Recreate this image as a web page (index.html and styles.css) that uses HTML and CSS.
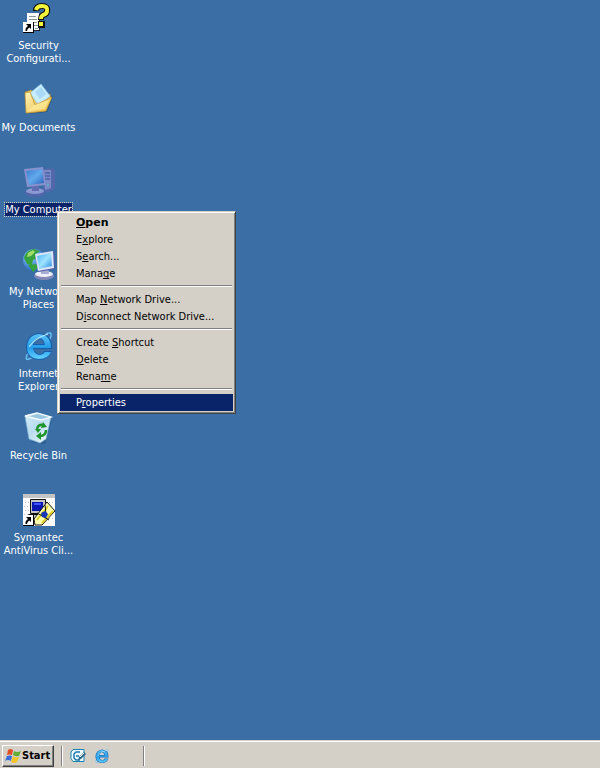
FILE: index.html
```html
<!DOCTYPE html>
<html lang="en">
<head>
<meta charset="utf-8">
<title>Desktop</title>
<link rel="stylesheet" href="styles.css">
</head>
<body>
<svg class="defs" aria-hidden="true">
  <defs>
    <linearGradient id="screen" x1="0" y1="0" x2="1" y2="1"><stop offset="0" stop-color="#48b0f4"/><stop offset=".5" stop-color="#a0e4ff"/><stop offset="1" stop-color="#258be0"/></linearGradient>
    <linearGradient id="folder" x1="0" y1="0" x2="1" y2="1"><stop offset="0" stop-color="#fff5bb"/><stop offset="1" stop-color="#eab83d"/></linearGradient>
    <linearGradient id="dim" x1="0" y1="0" x2="1" y2="1"><stop offset="0" stop-color="#3d7cd0"/><stop offset=".5" stop-color="#62a9ec"/><stop offset="1" stop-color="#2a61bd"/></linearGradient>
    <radialGradient id="globe" cx=".35" cy=".3" r=".8"><stop offset="0" stop-color="#9bd8ff"/><stop offset="1" stop-color="#1659be"/></radialGradient>
    <linearGradient id="bin" x1="0" y1="0" x2="1" y2="1"><stop offset="0" stop-color="#d4ecf8"/><stop offset=".45" stop-color="#b9dcf0"/><stop offset="1" stop-color="#f4fcff"/></linearGradient>
    <linearGradient id="ie" x1="0" y1="0" x2="0" y2="1"><stop offset="0" stop-color="#5cc2f6"/><stop offset=".55" stop-color="#249ce9"/><stop offset="1" stop-color="#63d2ff"/></linearGradient>
    <symbol id="shortcut" viewBox="0 0 11 11"><path fill="#000" d="M0 0h11v11H0z"/><path fill="#fff" d="M0 0h10v10H0z"/><path fill="#000" d="M3 2h5v5L6.500 5.500Q4 6.500 4 9H2.500Q2 6 5 4z"/></symbol>
    <symbol id="e-logo" viewBox="0 0 32 32">
      <path fill="none" stroke="#68c4f6" stroke-width="1.500" d="M5 23Q1 31 6 29Q9 28 13 25M23 4Q29 1 28 6L26 11"/>
      <path fill="#1560ac" fill-rule="evenodd" d="M16 3Q30 4 29 19H11Q12 24 17 24Q20 24 21 21H29Q26 30 16 30Q3 29 3 17Q4 4 16 3zM11 14H21Q20 9 16 9Q12 9 11 14z"/>
      <path fill="url(#ie)" fill-rule="evenodd" d="M16 4Q28 5 28 18H10Q11 25 17 25Q20 25 22 22H28Q25 29 16 29Q4 28 4 17Q5 5 16 4zM10 15H22Q21 8 16 8Q11 8 10 15z"/>
      <path fill="none" stroke="#b0e9ff" stroke-width="1.300" d="M6 17Q12 8 25 4"/>
    </symbol>
  </defs>
</svg>

<main class="desktop">
  <ul class="icons">
    <li><button class="shortcut" type="button">
      <svg viewBox="0 0 32 32" aria-hidden="true">
        <path fill="#223" d="M5 12h12v17H5z"/><path fill="#fff" d="M4 11h12v17H4z"/>
        <path stroke="#899" d="M6 14.500h7M6 17.500h8M6 20.500h8M10 23.500h5M12 26.500h3"/>
        <path fill="none" stroke="#111" stroke-width="6" d="M13 9Q13 4 19 4Q25 4 24 9Q24 12 20 13Q18 14 18 18"/>
        <path fill="none" stroke="#f4f43a" stroke-width="4" d="M13 8Q14 4 19 4Q25 4 24 9Q24 12 20 13Q18 14 18 17"/>
        <path fill="#111" d="M15 19h7v7h-7z"/><path fill="#f4f43a" d="M16 20h4v4h-4z"/>
        <use href="#shortcut" x="0" y="20" width="11" height="11"/>
      </svg>
      <span class="label">Security<br>Configurati...</span></button></li>
    <li><button class="shortcut" type="button">
      <svg viewBox="0 0 32 32" aria-hidden="true">
        <path fill="#173f6c" opacity=".5" d="M5 30l19-2 6-15-2-2-4 15z"/>
        <path fill="#efc85a" stroke="#9b762b" stroke-width=".6" d="M2 8l6-2 5 3 14 1 1 4-6 13-18 2z"/>
        <path fill="#c7edff" stroke="#8cc4ec" stroke-width=".7" d="M7 9L18 0l9 12-11 10z"/>
        <path fill="#94cdf3" d="M12 8l6-5 5 7-6 5z" opacity=".6"/>
        <path fill="url(#folder)" stroke="#bd922f" stroke-width=".7" d="M3 29L2 9l5-1 5 13 17-8-6 14z"/>
        <path fill="#fff1a4" d="M5 27l6-6 15-5-4 9z" opacity=".6"/>
      </svg>
      <span class="label">My Documents</span></button></li>
    <li><button class="shortcut" type="button">
      <svg viewBox="0 0 32 32" aria-hidden="true">
        <path fill="#5368ab" d="M20 3l9-1 3 2v19l-8 4-4-3z"/><path fill="#7b8bc8" d="M21 4h7v18l-6 2z"/>
        <path stroke="#354f97" d="M22 7h5M22 10h5M22 13h5"/><circle cx="25" cy="19" r="1" fill="#52b5c5"/>
        <ellipse cx="12" cy="27" rx="10" ry="4" fill="#5365aa"/><ellipse cx="12" cy="25" rx="9" ry="3" fill="#8c98d0"/>
        <path fill="#606db4" d="M9 19h7v6H9z"/><path fill="#8791cc" d="M1 3l19-2 3 18-19 2z"/>
        <path fill="url(#dim)" d="M3 5l16-2 2 14-15 2z"/>
      </svg>
      <span class="label selected">My Computer</span></button></li>
    <li><button class="shortcut" type="button">
      <svg viewBox="0 0 32 32" aria-hidden="true">
        <circle cx="11" cy="12" r="11" fill="url(#globe)"/>
        <path fill="#36a33e" d="M1 10Q3 2 11 1l6 2-4 3 2 4-5 2-1 5-5-1zM5 17l8-1 2 4-5 4z"/><path fill="#a3dd69" d="M5 5l5-3 2 2-4 4-4 1z"/>
        <ellipse cx="21" cy="28" rx="10" ry="4" fill="#8388b8"/><ellipse cx="21" cy="26" rx="9" ry="3" fill="#eeeef8"/>
        <path fill="#a8add4" d="M18 19h7l1 7h-8z"/><path fill="#515ba0" d="M12 7l19-3 1 17-17 3z"/><path fill="#dce6fb" d="M12 6l18-3 1 17-16 3z"/>
        <path fill="url(#screen)" d="M14 8l14-3 1 13-13 3z"/>
      </svg>
      <span class="label">My Network<br>Places</span></button></li>
    <li><button class="shortcut" type="button">
      <svg viewBox="0 0 32 32" aria-hidden="true"><use href="#e-logo"/></svg>
      <span class="label">Internet<br>Explorer</span></button></li>
    <li><button class="shortcut" type="button">
      <svg viewBox="0 0 32 32" aria-hidden="true">
        <path fill="#204e78" opacity=".5" d="M8 30l14 2 7-24-3-1z"/>
        <path fill="url(#bin)" stroke="#82b8d5" stroke-width=".7" d="M2 4L14 1l14 4-5 22-6 4-11-4z"/>
        <path fill="#9cc8df" d="M4 5l10-3 12 3-8 3z"/><path fill="none" stroke="#f6fdff" stroke-width="1.300" d="M2 4l16 4 10-3L14 1z"/>
        <g fill="none" stroke="#20942c" stroke-width="2.500"><path d="M14 17q1-5 7-4"/><path d="M23 18q0 6-6 6"/></g>
        <path fill="#20942c" d="M20 10l4 5-6 1zM18 20l-5 4 5 4zM12 17h6l-3 4z"/>
      </svg>
      <span class="label">Recycle Bin</span></button></li>
    <li><button class="shortcut" type="button">
      <svg viewBox="0 0 32 32" aria-hidden="true">
        <path fill="#fff" d="M0 0h32v32H0z"/><path fill="#c4c4c4" d="M0 0h32v4H0z"/><path stroke="#c7c7c7" stroke-dasharray="1 2" d="M2 8.500h30M1 12.500h30M2 16.500h30M1 20.500h30M2 24.500h30"/>
        <path fill="#c4c4c4" stroke="#111" d="M7.500 5.500h15v14h-15zM5.500 20.500h18v4h-18z"/><path fill="#0715b1" d="M9 8h11v9H9z"/><path fill="#3b54ff" d="M11 9h7v2h-7z"/>
        <path fill="#ffffb0" stroke="#111" d="M11 25L24 8l8 9-13 14h-7z"/><path stroke="#ddcf29" stroke-width="2" d="M14 26l11-14M19 29l11-12"/><path stroke="#111" d="M14 19l12 7M22 11l1 9"/><path fill="#1637b6" d="M18 19l4-2 3 3-2 4-4-1z"/>
        <use href="#shortcut" x="0" y="21" width="11" height="11"/>
      </svg>
      <span class="label">Symantec<br>AntiVirus Cli...</span></button></li>
  </ul>

  <div class="menu" role="menu" aria-label="My Computer">
    <button type="button" role="menuitem" class="default"><u>O</u>pen</button>
    <button type="button" role="menuitem">E<u>x</u>plore</button>
    <button type="button" role="menuitem">S<u>e</u>arch...</button>
    <button type="button" role="menuitem">Mana<u>g</u>e</button>
    <hr>
    <button type="button" role="menuitem">Map <u>N</u>etwork Drive...</button>
    <button type="button" role="menuitem">D<u>i</u>sconnect Network Drive...</button>
    <hr>
    <button type="button" role="menuitem">Create <u>S</u>hortcut</button>
    <button type="button" role="menuitem"><u>D</u>elete</button>
    <button type="button" role="menuitem">Rena<u>m</u>e</button>
    <hr>
    <button type="button" role="menuitem" class="active">P<u>r</u>operties</button>
  </div>
</main>

<footer class="taskbar">
  <button class="start" type="button">
    <svg viewBox="0 0 16 16" aria-hidden="true"><path fill="#e34f24" d="M3 2q3-2 5 0L7 7Q4 6 2 7z"/><path fill="#63ae35" d="M9 3q3 2 7 0l-2 5q-3 1-6-1z"/><path fill="#3c6edb" d="M2 8q3-1 5 0l-1 5q-3-2-6 0z"/><path fill="#f4c526" d="M8 8q2 2 6 1l-2 5q-3 2-6 0z"/></svg>
    Start</button>
  <nav class="quick" aria-label="Quick Launch">
    <button type="button" aria-label="Show Desktop"><svg viewBox="0 0 16 16" aria-hidden="true"><path fill="#eefaff" stroke="#1683b5" d="M3 1.500h11v12H3l-2-3V4z"/><path fill="none" stroke="#177baf" stroke-width="1.500" d="M10 4H6L4 6v4l2 2h4M6 8h3"/><path fill="#28658b" d="M9 9l5-5 2 2-5 5-3 1z"/><path stroke="#fff" d="M10 9l4-4"/></svg></button>
    <button type="button" aria-label="Internet Explorer"><svg viewBox="0 0 32 32" aria-hidden="true"><use href="#e-logo"/></svg></button>
  </nav>
  <span class="grip"></span>
</footer>
</body>
</html>
```
FILE: styles.css
```css
* { box-sizing: border-box; }

body {
  margin: 0;
  min-height: 100vh;
  display: flex;
  flex-direction: column;
  background: #3a6ea5;
  font: 11px/13px "DejaVu Sans Condensed", "Noto Sans", sans-serif;
}

button {
  margin: 0;
  padding: 0;
  border: 0;
  background: none;
  color: inherit;
  font: inherit;
}

svg { display: block; flex: none; }
.defs { position: absolute; width: 0; height: 0; }

.desktop { position: relative; flex: 1; }

.icons {
  display: grid;
  grid-auto-rows: 82px;
  width: 77px;
  margin: 0;
  padding: 2px 0 0;
  list-style: none;
}

.shortcut {
  display: flex;
  flex-direction: column;
  align-items: center;
  gap: 5px;
  width: 100%;
  color: #fff;
  white-space: nowrap;
}

.shortcut svg { width: 32px; height: 32px; }
.selected { background: #0a246a; outline: 1px dotted #d4d0c8; }

.menu {
  position: absolute;
  top: 211px;
  left: 57px;
  width: 179px;
  padding: 2px;
  border: 1px solid;
  border-color: #d4d0c8 #404040 #404040 #d4d0c8;
  background: #d4d0c8;
  box-shadow: inset 1px 1px #fff, inset -1px -1px #808080;
}

.menu button {
  display: block;
  width: 100%;
  height: 17px;
  padding: 0 16px;
  color: #000;
  text-align: left;
  white-space: nowrap;
}

.menu u { text-underline-offset: 1px; text-decoration-thickness: 1px; text-decoration-skip-ink: none; }
.menu .default { font-family: "DejaVu Sans", sans-serif; font-weight: bold; }
.menu .active { background: #0a246a; color: #fff; }

.menu hr {
  height: 2px;
  margin: 3px 1px 4px;
  border: 0;
  border-top: 1px solid #808080;
  border-bottom: 1px solid #fff;
}

.taskbar {
  display: flex;
  align-items: center;
  height: 28px;
  padding: 2px 2px 0;
  border-top: 1px solid #d4d0c8;
  background: #d4d0c8;
  box-shadow: inset 0 1px #fff;
}

.start {
  display: flex;
  align-items: center;
  gap: 1px;
  height: 22px;
  padding: 0 3px 0 2px;
  border: 1px solid;
  border-color: #fff #404040 #404040 #fff;
  box-shadow: inset -1px -1px #808080;
  color: #000;
  font-weight: bold;
}

.start svg, .quick svg { width: 16px; height: 16px; }

.quick {
  display: flex;
  align-items: center;
  gap: 8px;
  width: 82px;
  height: 20px;
  margin-left: 7px;
  padding-left: 8px;
  border-left: 1px solid #808080;
  box-shadow: inset 1px 0 #fff;
}

.grip {
  width: 2px;
  height: 20px;
  border-left: 1px solid #808080;
  border-right: 1px solid #fff;
}
```
